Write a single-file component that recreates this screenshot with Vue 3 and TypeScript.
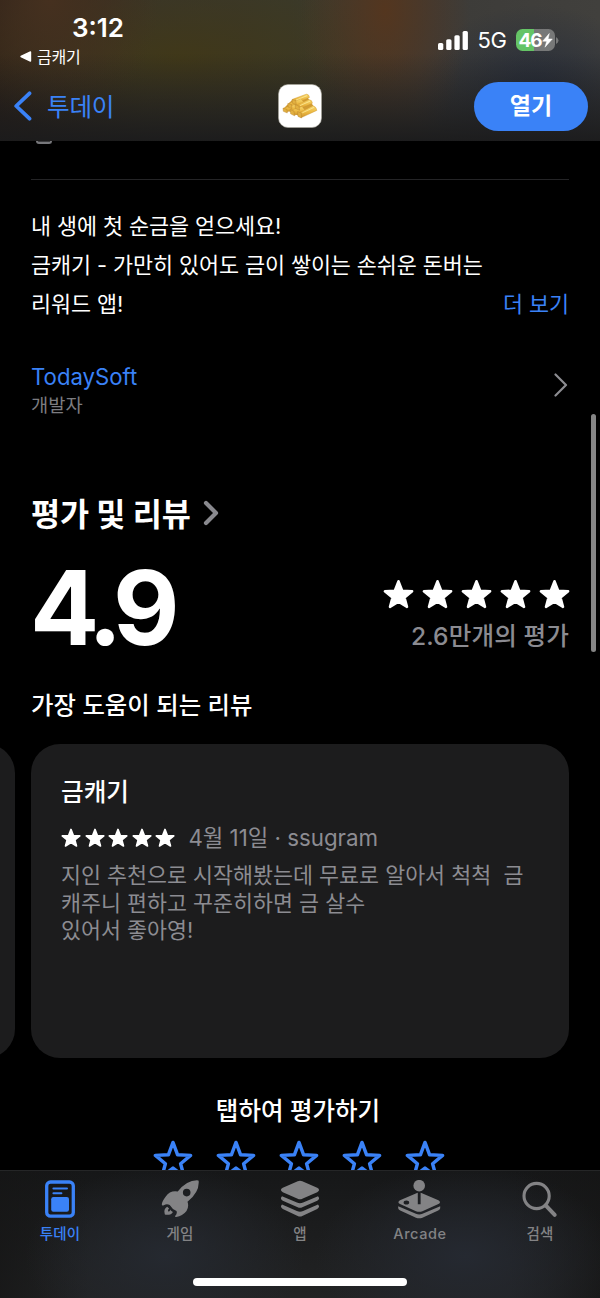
<script setup lang="ts">
interface Tab {
  id: string
  label: string
  active?: boolean
}

const STAR = 'M50 7 L62 38 L94 39.5 L69.5 60 L77.5 90 L50 73 L22.5 90 L30.5 60 L6 39.5 L38 38 Z'
const STAR_OUTLINE = 'M50 6 L61.5 37 L94 38.5 L69 59.5 L78 92 L50 70 L22 92 L31 59.5 L6 38.5 L38.5 37 Z'

const description: string[] = [
  '내 생에 첫 순금을 얻으세요!',
  '금캐기 - 가만히 있어도 금이 쌓이는 손쉬운 돈버는',
  '리워드 앱!',
]

const reviewLines: string[] = [
  '지인 추천으로 시작해봤는데 무료로 알아서 척척\u00a0 금',
  '캐주니 편하고 꾸준히하면 금 살수',
  '있어서 좋아영!',
]

const tabs: Tab[] = [
  { id: 'today', label: '투데이', active: true },
  { id: 'games', label: '게임' },
  { id: 'apps', label: '앱' },
  { id: 'arcade', label: 'Arcade' },
  { id: 'search', label: '검색' },
]
</script>

<template>
  <div class="screen">
    <header class="header">
      <div class="status">
        <div class="clock">
          <div class="time">3:12</div>
          <div class="return">
            <svg width="12" height="11" viewBox="0 0 12 11"><path d="M1 5.5 L10.5 1 V10 Z" fill="#fff" stroke="#fff" stroke-width="1.4" stroke-linejoin="round" /></svg>
            <span>금캐기</span>
          </div>
        </div>
        <div class="indicators">
          <svg class="signal" width="31" height="20" viewBox="0 0 31 20" fill="#fff">
            <rect x="0" y="12" width="5.3" height="7" rx="1.6" />
            <rect x="8.2" y="8.2" width="5.3" height="10.8" rx="1.6" />
            <rect x="16.4" y="4.2" width="5.3" height="14.8" rx="1.6" />
            <rect x="24.6" y="0" width="5.3" height="19" rx="1.6" />
          </svg>
          <span class="network">5G</span>
          <div class="battery">
            <span>46</span>
            <svg width="11" height="15" viewBox="0 0 11 15"><path d="M7.3 0.5 L0.6 8.2 H4.7 L3 14.2 L10.3 6 H6.1 Z" fill="#fff" stroke="#fff" stroke-width=".5" stroke-linejoin="round" /></svg>
          </div>
          <svg class="cap" width="3" height="7" viewBox="0 0 3 7"><path d="M0 0 Q2.5 1.5 2.5 3.5 Q2.5 5.5 0 7Z" fill="#777878" /></svg>
        </div>
      </div>
      <div class="navbar">
        <div class="back">
          <svg width="18" height="30" viewBox="0 0 18 30"><path d="M15.5 2.3 L2.2 15 L15.5 27.7" fill="none" stroke="#3a82f7" stroke-width="3.8" stroke-linecap="round" stroke-linejoin="round" /></svg>
          <span>투데이</span>
        </div>
        <svg class="app-icon" width="44" height="44" viewBox="0 0 44 44">
          <defs>
            <linearGradient id="gold" x1="0" y1="0" x2="0" y2="1">
              <stop offset="0" stop-color="#f8d76e" />
              <stop offset=".55" stop-color="#ebb740" />
              <stop offset="1" stop-color="#cc932c" />
            </linearGradient>
          </defs>
          <rect x=".5" y=".5" width="43" height="43" rx="9.5" fill="#fff" stroke="#aaa79c" stroke-width=".6" />
          <path d="M5.5 24.5 L14.5 15.5 L28 11 L32 17 L37.5 25 L23 33 Z" fill="#d29c33" />
          <g fill="url(#gold)" stroke="#c58d2b" stroke-width=".35" stroke-linejoin="round">
            <path d="M14.5 15.2 L28.5 10.1 Q31 10.2 31.5 13.4 L18 19.5 Z" />
            <path d="M11 19.2 L23 14.8 L26 18.5 L13.5 24 Z" />
            <path d="M18 21.2 L31 15.6 Q34.2 16 34.4 19.2 L21.5 25.2 Z" />
            <path d="M5.5 24.3 L17 20.5 L20 24.2 L8.7 28 Z" />
            <path d="M13.5 26 L24 22.5 L27.5 26.8 L16.5 31.3 Z" />
            <path d="M22 28.2 L35 21.8 Q38.2 22.5 38.9 26.4 L23 33.8 Z" />
          </g>
          <g fill="#e2b040" stroke="#b27f2a" stroke-width=".4">
            <path d="M14 15.5 L17.8 16.5 L18.2 20.5 L14.5 19.3 Z" />
            <path d="M9.8 19.4 L13.5 20.5 L14 24.6 L10.3 23.3 Z" />
            <path d="M17 20.6 L21 22 L21.6 26.2 L17.6 24.6 Z" />
            <path d="M5 24 L8.8 25.4 L9.3 29 L5.3 27.3 Z" />
            <path d="M12 25.5 L16 27 L16.5 31.8 L12.6 29.8 Z" />
            <path d="M19.6 27.5 L23.2 29 L23.4 34 L20 32.4 Z" />
          </g>
          <g fill="none" stroke="#fff0a5" stroke-width=".7">
            <path d="M18 16 L29 11.7 M22 21.6 L32 17.2 M24.3 28.8 L36 23.4" />
          </g>
        </svg>
        <div class="open">열기</div>
      </div>
    </header>

    <main class="content">
      <div class="clipped"></div>
      <div class="divider"></div>

      <section class="description">
        <p v-for="line in description" :key="line">{{ line }}</p>
        <span class="more">더 보기</span>
      </section>

      <section class="developer">
        <div class="dev-text">
          <div class="dev-name">TodaySoft</div>
          <div class="dev-role">개발자</div>
        </div>
        <svg width="14" height="24" viewBox="0 0 14 24"><path d="M1.5 1.5 L12 12 L1.5 22.5" fill="none" stroke="#8c8c91" stroke-width="2.2" stroke-linecap="round" stroke-linejoin="round" /></svg>
      </section>

      <h2 class="heading">
        <span>평가 및 리뷰</span>
        <svg width="17" height="26" viewBox="0 0 17 26"><path d="M3 3 L13 13 L3 23" fill="none" stroke="#89898e" stroke-width="4.2" stroke-linecap="round" stroke-linejoin="round" /></svg>
      </h2>

      <section class="rating">
        <div class="score">4.9</div>
        <div class="summary">
          <div class="stars-large">
            <svg v-for="n in 5" :key="n" width="31" height="31" viewBox="0 0 100 100"><path :d="STAR" fill="#fff" stroke="#fff" stroke-width="8" stroke-linejoin="round" /></svg>
          </div>
          <div class="count">2.6만개의 평가</div>
        </div>
      </section>

      <h3 class="helpful">가장 도움이 되는 리뷰</h3>

      <section class="cards">
        <div class="card previous"></div>
        <article class="card">
          <div class="review-title">금캐기</div>
          <div class="review-meta">
            <div class="stars-small">
              <svg v-for="n in 5" :key="n" width="20" height="20" viewBox="0 0 100 100"><path :d="STAR" fill="#fff" stroke="#fff" stroke-width="8" stroke-linejoin="round" /></svg>
            </div>
            <span>4월 11일 · ssugram</span>
          </div>
          <p v-for="line in reviewLines" :key="line">{{ line }}</p>
        </article>
      </section>

      <div class="tap-title">탭하여 평가하기</div>
      <div class="stars-outline">
        <svg v-for="n in 5" :key="n" width="40" height="40" viewBox="0 0 100 100"><path :d="STAR_OUTLINE" fill="none" stroke="#3a82f7" stroke-width="8.6" stroke-linejoin="round" /></svg>
      </div>
    </main>

    <nav class="tabbar">
      <div class="tabs">
        <div v-for="tab in tabs" :key="tab.id" class="tab" :class="{ active: tab.active }">
          <svg width="44" height="40" viewBox="0 0 44 40" fill="currentColor">
            <template v-if="tab.id === 'today'">
              <rect x="8.7" y="2" width="26.6" height="34.2" rx="3.8" fill="none" stroke="currentColor" stroke-width="3.3" />
              <path d="M15.4 8.5 H29 M15.4 13.3 H23.4" fill="none" stroke="currentColor" stroke-width="2" stroke-linecap="round" />
              <rect x="13.2" y="17" width="17.8" height="14.8" rx="2.2" />
            </template>
            <template v-else-if="tab.id === 'games'">
              <path fill-rule="evenodd" d="M40.3 .4 Q29.2 -.4 19.7 11.6 Q12.2 10.2 7.6 16.8 Q3.7 22 3.8 24.6 Q3.9 26 5.8 25.2 Q9 23.6 11.7 25.1 Q14.2 29.4 18.5 31 Q19.5 33.2 17.3 35.8 Q16.7 37.3 18.2 37.1 Q24.5 36.2 28.5 31.1 Q31.2 26.6 29.5 21.8 Q41.4 12 40.7 1.2 Q40.7 .5 40.3 .4 Z M28.7 8.8 A3.8 3.8 0 1 1 28.7 16.4 A3.8 3.8 0 1 1 28.7 8.8 Z" />
              <path d="M9.2 26.8 Q5.5 28.8 6.6 33.3 Q6.6 34.9 7.9 34.8 Q13.4 35.2 14.9 31.9 Q12.6 30.8 12 29.5 Q12.4 31.8 10.3 31.4 Q9.2 30 11.1 28.5 Z" />
            </template>
            <template v-else-if="tab.id === 'apps'">
              <path d="M19.7 1.3 Q22 .3 24.3 1.3 L39.2 7.8 Q43 10 39.2 12.2 L24.3 18.7 Q22 19.7 19.7 18.7 L4.8 12.2 Q1 10 4.8 7.8 Z" />
              <path d="M4 16.3 L18.9 22.6 Q22 24 25.1 22.6 L40 16.3 Q42.5 18.6 39.2 20.8 L24.3 27.3 Q22 28.3 19.7 27.3 L4.8 20.8 Q1.5 18.6 4 16.3 Z" />
              <path d="M4 24.6 L18.9 31.1 Q22 32.5 25.1 31.1 L40 24.6 Q42.5 26.9 39.2 29 L24.3 36 Q22 37 19.7 36 L4.8 29 Q1.5 26.9 4 24.6 Z" />
            </template>
            <template v-else-if="tab.id === 'arcade'">
              <circle cx="21.2" cy="5.7" r="5.8" />
              <path fill-rule="evenodd" d="M19 13 L2 20.3 Q-1.2 22.2 2 23.9 L18 31.2 Q21.2 32.5 24.4 31.2 L40.4 23.9 Q43.6 22.2 40.4 20.3 L23.4 13 L22.6 12.7 V24.2 H19.8 V12.7 Z M8.4 20.4 A2.8 2 0 1 0 8.4 24.4 A2.8 2 0 1 0 8.4 20.4 Z" />
              <path d="M.2 26.2 L17.9 33.8 Q21.2 35.1 24.5 33.8 L42.2 26.2 V28.2 Q42 29.7 40.2 30.5 L24.4 37.7 Q21.2 39 18 37.7 L2.2 30.5 Q.4 29.7 .2 28.2 Z" />
            </template>
            <template v-else>
              <circle cx="18.6" cy="16" r="12.6" fill="none" stroke="currentColor" stroke-width="3.1" />
              <path d="M27.7 25.4 L36.7 34.8" fill="none" stroke="currentColor" stroke-width="4" stroke-linecap="round" />
            </template>
          </svg>
          <span>{{ tab.label }}</span>
        </div>
      </div>
      <div class="home"></div>
    </nav>

    <div class="scrollbar"></div>
  </div>
</template>

<style>
body {
  background: #000;
}
</style>

<style scoped>
.screen {
  position: relative;
  width: 600px;
  height: 1298px;
  display: flex;
  flex-direction: column;
  overflow: hidden;
  background: #000;
  color: #fff;
  font-family: Inter, "Noto Sans CJK KR", sans-serif;
  white-space: nowrap;
}
.screen svg {
  display: block;
  flex: none;
}
.header {
  height: 141px;
  flex: none;
  box-sizing: border-box;
  display: flex;
  flex-direction: column;
  background:
    linear-gradient(to bottom, transparent 38%, rgba(27, 27, 28, 0.95) 100%),
    radial-gradient(ellipse 85px 150px at 385px 10px, #54361f 0%, rgba(84, 54, 31, 0) 100%),
    radial-gradient(ellipse 110px 130px at 50px 0, #45301f 0%, rgba(69, 48, 31, 0) 100%),
    radial-gradient(ellipse 120px 90px at 535px 95px, #252c3a 0%, rgba(37, 44, 58, 0) 100%),
    radial-gradient(ellipse 230px 85px at 180px 58px, #403819 0%, rgba(64, 56, 25, 0) 100%),
    linear-gradient(to right, #2d2118 0, #39352a 150px, #3a392a 290px, #3c3b38 430px, #41403d 600px);
}
.status {
  height: 73px;
  display: flex;
  justify-content: space-between;
}
.clock {
  padding-left: 20px;
}
.time {
  margin: 13px 0 0 52px;
  height: 30px;
  font-size: 26px;
  line-height: 30px;
  font-weight: 600;
}
.return {
  display: flex;
  align-items: center;
  gap: 5px;
  height: 27px;
  font-size: 16px;
  letter-spacing: -0.2px;
}
.return span {
  margin-top: -1px;
}
.indicators {
  display: flex;
  align-items: center;
  height: 22px;
  margin: 29px 41px 0 0;
}
.signal {
  margin-right: 8.5px;
  margin-top: 1px;
}
.network {
  width: 38.5px;
  font-size: 22px;
  letter-spacing: -0.4px;
}
.battery {
  width: 39px;
  height: 22px;
  border-radius: 6.5px;
  display: flex;
  align-items: center;
  justify-content: center;
  background: linear-gradient(to right, #65c466 18px, #777878 18px);
  font-size: 19px;
  font-weight: 700;
  letter-spacing: -1px;
}
.cap {
  margin-left: 1px;
}
.navbar {
  height: 66px;
  display: flex;
  align-items: center;
  padding: 0 12px 0 14px;
}
.back {
  width: 196px;
  display: flex;
  align-items: center;
  gap: 15px;
  color: #3a82f7;
  font-size: 24.6px;
  letter-spacing: -0.2px;
}
.back span {
  margin-top: -3px;
}
.open {
  margin-left: auto;
  width: 114px;
  height: 49px;
  line-height: 49px;
  border-radius: 25px;
  background: #3a82f7;
  text-align: center;
  font-size: 23px;
  font-weight: 700;
}
.app-icon {
  margin-left: 68px;
}
.content {
  flex: 1;
  min-height: 0;
  overflow: hidden;
  padding: 0 31px;
}
.clipped {
  box-sizing: border-box;
  width: 16px;
  height: 3px;
  margin-left: 5px;
  border: 2px solid #77777b;
  border-top: 0;
  border-radius: 0 0 6px 6px;
  background: #3a3a3c;
}
.divider {
  height: 1px;
  margin-top: 35px;
  background: #242426;
}
.description {
  position: relative;
  margin-top: 27px;
}
p {
  margin: 0;
}
.description p,
.more {
  height: 39px;
  line-height: 39px;
  font-size: 21.8px;
  letter-spacing: -0.08px;
}
.more {
  position: absolute;
  right: 0;
  bottom: 0;
  color: #3a82f7;
}
.developer {
  display: flex;
  justify-content: space-between;
  align-items: center;
  height: 58px;
  margin-top: 31px;
}
.developer svg {
  margin: 1px 1px 0 0;
}
.dev-text {
  padding-top: 12px;
}
.dev-name {
  height: 30px;
  line-height: 30px;
  color: #3a82f7;
  font-size: 22.2px;
}
.dev-role {
  height: 26px;
  line-height: 27px;
  color: #7c7c80;
  font-size: 18.7px;
}
.heading {
  display: flex;
  align-items: center;
  gap: 12px;
  height: 48px;
  margin: 76px 0 0;
  font-size: 31.6px;
  font-weight: 700;
  letter-spacing: -0.1px;
}
.heading span {
  margin-bottom: 3px;
}
.rating {
  display: flex;
  justify-content: space-between;
  height: 142px;
}
.score {
  line-height: 142px;
  font-size: 102.5px;
  font-weight: 700;
  letter-spacing: -7.9px;
  margin-left: -1px;
}
.summary {
  display: flex;
  flex-direction: column;
  align-items: flex-end;
  padding-top: 42px;
}
.stars-large {
  display: flex;
  gap: 8px;
  margin-right: -0.5px;
}
.count {
  margin-top: 9px;
  height: 34px;
  line-height: 34px;
  color: #8b8b91;
  font-size: 24.6px;
  font-weight: 500;
  letter-spacing: 0.1px;
}
.helpful {
  margin: 9.5px 0 0;
  height: 32.5px;
  line-height: 32px;
  font-size: 24.4px;
  font-weight: 500;
}
.cards {
  display: flex;
  gap: 16px;
  margin: 23px 0 0 -554px;
}
.card {
  flex: none;
  box-sizing: border-box;
  width: 538px;
  height: 314px;
  padding: 30px 30px;
  border-radius: 29px;
  background: #1c1c1d;
  color: #8c8c92;
}
.review-title {
  height: 36px;
  line-height: 36px;
  color: #fff;
  font-size: 24.6px;
  font-weight: 500;
}
.review-meta {
  display: flex;
  align-items: center;
  gap: 13px;
  height: 34px;
  margin: 10px 0 8px;
  font-size: 22.3px;
}
.review-meta span {
  margin-top: -3px;
}
.stars-small {
  display: flex;
  gap: 3.6px;
  margin-top: 1px;
}
.card p {
  height: 27.7px;
  line-height: 27.7px;
  font-size: 21.72px;
}
.tap-title {
  height: 36px;
  margin-top: 35px;
  padding-right: 4px;
  line-height: 36px;
  text-align: center;
  font-size: 24.5px;
  font-weight: 500;
}
.stars-outline {
  display: flex;
  justify-content: center;
  gap: 23px;
  margin-top: 11px;
  padding-right: 2px;
}
.tabbar {
  box-sizing: border-box;
  height: 128px;
  flex: none;
  border-top: 1px solid #252627;
  background:
    radial-gradient(ellipse 140px 90px at 165px 85px, #252930 0%, rgba(37, 41, 48, 0) 100%),
    radial-gradient(ellipse 150px 90px at 465px 85px, #252931 0%, rgba(37, 41, 49, 0) 100%),
    linear-gradient(to right, rgba(21, 21, 21, 0.7) 0, transparent 90px, transparent 510px, rgba(21, 21, 21, 0.7) 600px),
    linear-gradient(to bottom, #161718, #222324);
}
.tabs {
  display: flex;
  height: 102px;
  padding-top: 9px;
  box-sizing: border-box;
}
.tab {
  width: 120px;
  display: flex;
  flex-direction: column;
  align-items: center;
  color: #838385;
}
.tab span {
  height: 28px;
  line-height: 28px;
  font-size: 14.5px;
  font-weight: 500;
  letter-spacing: 0.1px;
}
.tab:nth-child(4) span {
  letter-spacing: 0.6px;
}
.tab.active {
  color: #3a82f7;
}
.home {
  width: 214px;
  height: 8px;
  margin: 5px auto 0;
  border-radius: 4px;
  background: #fff;
}
.scrollbar {
  position: absolute;
  left: 591px;
  top: 414px;
  width: 4.5px;
  height: 238px;
  border-radius: 3px;
  background: #858585;
}
</style>
